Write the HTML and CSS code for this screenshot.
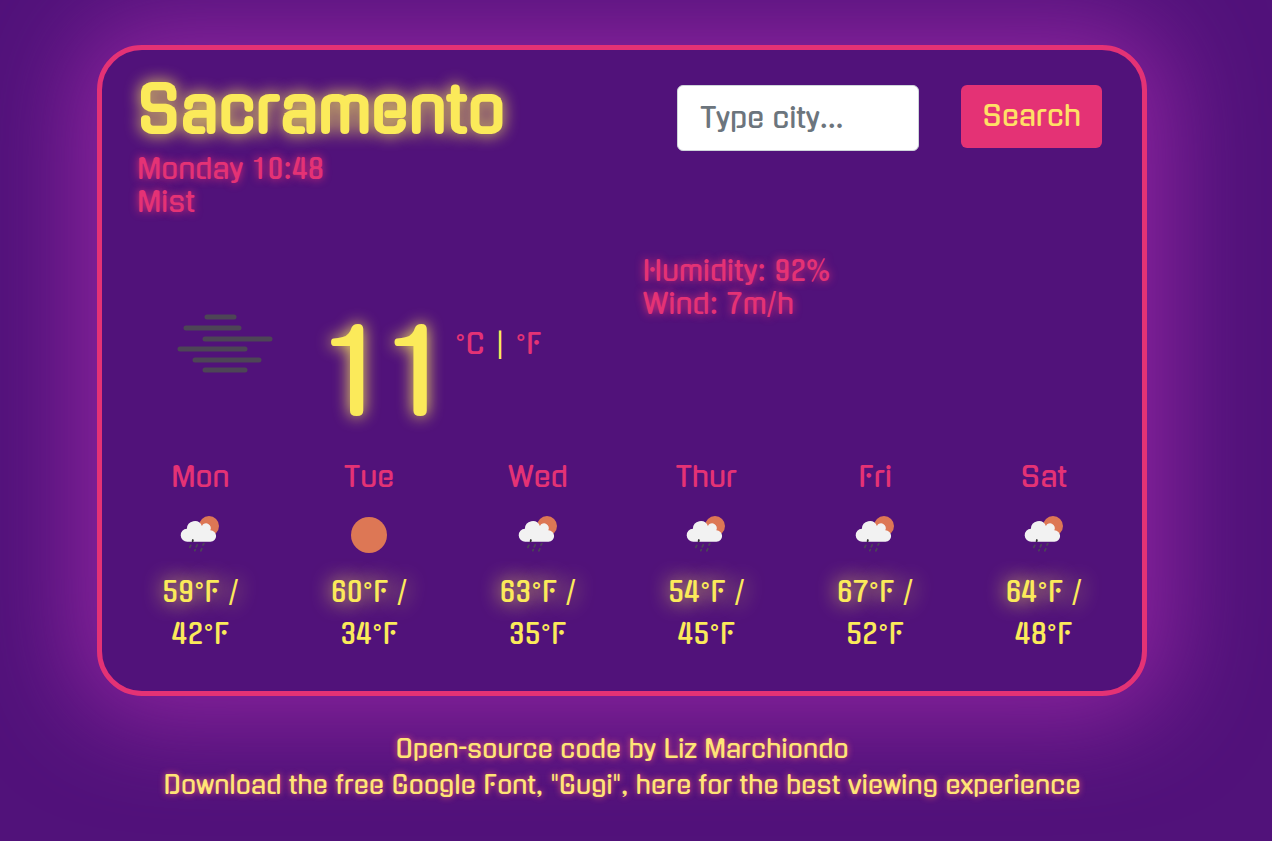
FILE: index.html
```
<!DOCTYPE html>
<html lang="en">
<head>
<meta charset="utf-8">
<meta name="viewport" content="width=device-width, initial-scale=1">
<title>Weather</title>
<link rel="stylesheet" href="styles.css">
</head>
<body>
<svg class="defs" aria-hidden="true">
  <symbol id="sun-rain" viewBox="0 0 40 40">
    <circle cx="29" cy="11" r="10" fill="#dd7755"/>
    <path fill="#f2f2f2" d="M7.5 26.7a6.5 6.5 0 0 1-.6-13 7.8 7.8 0 0 1 15-2.8 4.6 4.6 0 0 1 8.4 4.4 5.7 5.7 0 0 1 .2 11.4z"/>
    <g stroke="#4b4358" stroke-width="1.8" stroke-linecap="round">
      <path d="M12.9 25l-.3 1.2" stroke="#333"/>
      <path d="M10.8 30.4l-1 2M17.2 29.8l-1 2M23.8 28.6l-.8 1.4M15.3 34.6l-.5 1M21.8 33.8l-1 2"/>
    </g>
  </symbol>
  <symbol id="sun" viewBox="0 0 40 40">
    <circle cx="20" cy="20" r="18" fill="#dd7755"/>
  </symbol>
</svg>
<main class="card">
  <header class="top">
    <div>
      <h1 class="city">Sacramento</h1>
      <p class="info">Monday 10:48<br>Mist</p>
    </div>
    <form class="search">
      <input class="search-input" type="text" placeholder="Type city..." aria-label="City">
      <button class="search-button" type="submit">Search</button>
    </form>
  </header>
  <section class="current">
    <div class="reading">
      <svg class="fog" viewBox="0 0 120 80" role="img" aria-label="Mist">
        <g stroke="#4d4556" stroke-width="5" stroke-linecap="round">
          <path d="M45 13h27M24 24h53M43 35h65M18 45h65M33 56h64M43 66h40"/>
        </g>
      </svg>
      <strong class="degrees">11</strong>
      <span class="units"><a href="#">°C</a> | <a href="#">°F</a></span>
    </div>
    <p class="info">Humidity: 92%<br>Wind: 7m/h</p>
  </section>
  <section class="forecast">
    <div class="day"><h2 class="day-name">Mon</h2><svg class="day-icon"><use href="#sun-rain"/></svg><p class="temps"><span class="high">59°F /</span><br>42°F</p></div>
    <div class="day"><h2 class="day-name">Tue</h2><svg class="day-icon"><use href="#sun"/></svg><p class="temps"><span class="high">60°F /</span><br>34°F</p></div>
    <div class="day"><h2 class="day-name">Wed</h2><svg class="day-icon"><use href="#sun-rain"/></svg><p class="temps"><span class="high">63°F /</span><br>35°F</p></div>
    <div class="day"><h2 class="day-name">Thur</h2><svg class="day-icon"><use href="#sun-rain"/></svg><p class="temps"><span class="high">54°F /</span><br>45°F</p></div>
    <div class="day"><h2 class="day-name">Fri</h2><svg class="day-icon"><use href="#sun-rain"/></svg><p class="temps"><span class="high">67°F /</span><br>52°F</p></div>
    <div class="day"><h2 class="day-name">Sat</h2><svg class="day-icon"><use href="#sun-rain"/></svg><p class="temps"><span class="high">64°F /</span><br>48°F</p></div>
  </section>
</main>
<footer class="credits">
  <p><a href="#">Open-source code</a> by Liz Marchiondo</p>
  <p>Download the free Google Font, "Gugi", <a href="#">here</a> for the best viewing experience</p>
</footer>
</body>
</html>
```
FILE: styles.css
```
:root {
  --purple: #51127a;
  --pink: #e43275;
  --yellow: #fbea5a;
}

* {
  box-sizing: border-box;
}

body {
  margin: 0;
  padding: 45px 125px 40px 97px;
  background: var(--purple);
  color: var(--yellow);
  font-family: Gugi, Roboto, sans-serif;
  font-size: 28px;
}

h1, h2, p {
  margin: 0;
}

a {
  color: inherit;
  text-decoration: none;
}

.defs {
  display: none;
}

.card {
  background: var(--purple);
  border: 5px solid var(--pink);
  border-radius: 45px;
  box-shadow: 0 0 100px 20px #8f25a0;
  padding: 22px 14px 36px;
}

.top {
  display: flex;
  justify-content: space-between;
  padding: 0 26px 0 21px;
}

.city {
  margin-bottom: 3px;
  font-size: 62px;
  font-weight: 700;
  line-height: 78px;
  text-shadow: 0 0 16px var(--yellow);
}

.info {
  color: var(--pink);
  line-height: 33px;
  text-shadow: 0 0 8px var(--pink);
}

.search {
  display: flex;
  align-items: flex-start;
  gap: 42px;
  padding-top: 13px;
}

.search-input {
  width: 242px;
  height: 66px;
  padding: 0 22px;
  border: 1px solid #ced4da;
  border-radius: 6px;
  background: #fff;
  color: #495057;
  font: inherit;
}

.search-input::placeholder {
  color: #6c757d;
  opacity: 1;
}

.search-button {
  height: 63px;
  padding: 0 21px;
  border: 0;
  border-radius: 6px;
  background: var(--pink);
  color: #ffe066;
  font: inherit;
}

.current {
  display: grid;
  grid-template-columns: 1fr 1fr;
  padding: 36px 0 0 41px;
}

.reading {
  display: flex;
  align-items: flex-start;
  padding: 49px 0 0 5px;
}

.fog {
  width: 120px;
  height: 80px;
}

.degrees {
  margin: 0 6px 0 40px;
  font-size: 112px;
  font-weight: 400;
  line-height: 140px;
  text-shadow: 0 0 16px var(--yellow);
}

.units {
  padding-top: 22px;
  line-height: 36px;
  white-space: nowrap;
}

.units a {
  color: var(--pink);
}

.forecast {
  display: grid;
  grid-template-columns: repeat(6, 1fr);
  padding-top: 15px;
  text-align: center;
}

.day-name {
  color: var(--pink);
  font-size: 28px;
  font-weight: 400;
  line-height: 36px;
}

.day-icon {
  display: block;
  width: 40px;
  height: 40px;
  margin: 20px auto 16px;
}

.temps {
  line-height: 42px;
}

.high {
  text-shadow: 0 0 20px var(--yellow);
}

.credits {
  padding-top: 36px;
  color: #ffe476;
  font-size: 25px;
  line-height: 36px;
  text-align: center;
  text-shadow: 0 0 6px #e8606f;
}
```
